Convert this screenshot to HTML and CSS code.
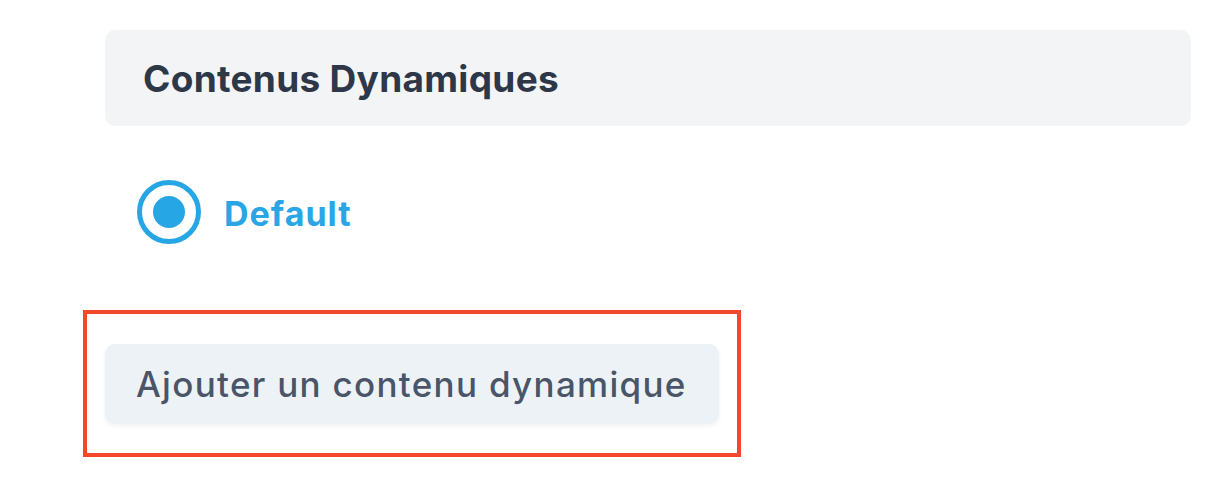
FILE: index.html
```html
<!DOCTYPE html>
<html>
<head>
  <title>Contenus Dynamiques</title>
  <link rel="stylesheet" href="styles.css">
</head>
<body>
  <div class="page">
    <div class="section-head">Contenus Dynamiques</div>

    <label class="option">
      <span class="radio"><span class="dot"></span></span>
      <span class="option-label">Default</span>
    </label>

    <div class="highlight">
      <button class="add-btn">Ajouter un contenu dynamique</button>
    </div>
  </div>
</body>
</html>
```

FILE: styles.css
```css
body {
  margin: 0;
  font-family: Inter, 'Noto Sans', sans-serif;
  background-color: white;
}

.page {
  padding: 30px 37px 0 83px;
}

.section-head {
  margin-left: 22px;
  height: 96px;
  display: flex;
  align-items: center;
  padding-left: 38px;
  background-color: #f3f4f6;
  border-radius: 10px;
  font-size: 37px;
  font-weight: 700;
  letter-spacing: 0.3px;
  color: #2d3748;
}

.option {
  display: flex;
  align-items: center;
  gap: 23px;
  margin: 54px 0 0 54px;
}

.radio {
  width: 64px;
  height: 64px;
  box-sizing: border-box;
  border: 5px solid #27a6e6;
  border-radius: 50%;
  display: flex;
  align-items: center;
  justify-content: center;
}

.dot {
  width: 32px;
  height: 32px;
  border-radius: 50%;
  background-color: #27a6e6;
}

.option-label {
  font-size: 34px;
  font-weight: 700;
  letter-spacing: 1px;
  color: #2aa5e5;
  padding-top: 2px;
}

.highlight {
  display: inline-block;
  margin-top: 66px;
  padding: 30px 18px 29px 18px;
  border: 4px solid #f4472b;
}

.add-btn {
  display: block;
  width: 614px;
  height: 80px;
  padding: 0 31px;
  text-align: left;
  white-space: nowrap;
  font-family: inherit;
  font-size: 35px;
  font-weight: 500;
  letter-spacing: 1.3px;
  color: #4a5568;
  background-color: #edf2f7;
  border: none;
  border-radius: 10px;
  box-shadow: 0 2px 4px rgba(0, 0, 0, 0.06);
}
```
